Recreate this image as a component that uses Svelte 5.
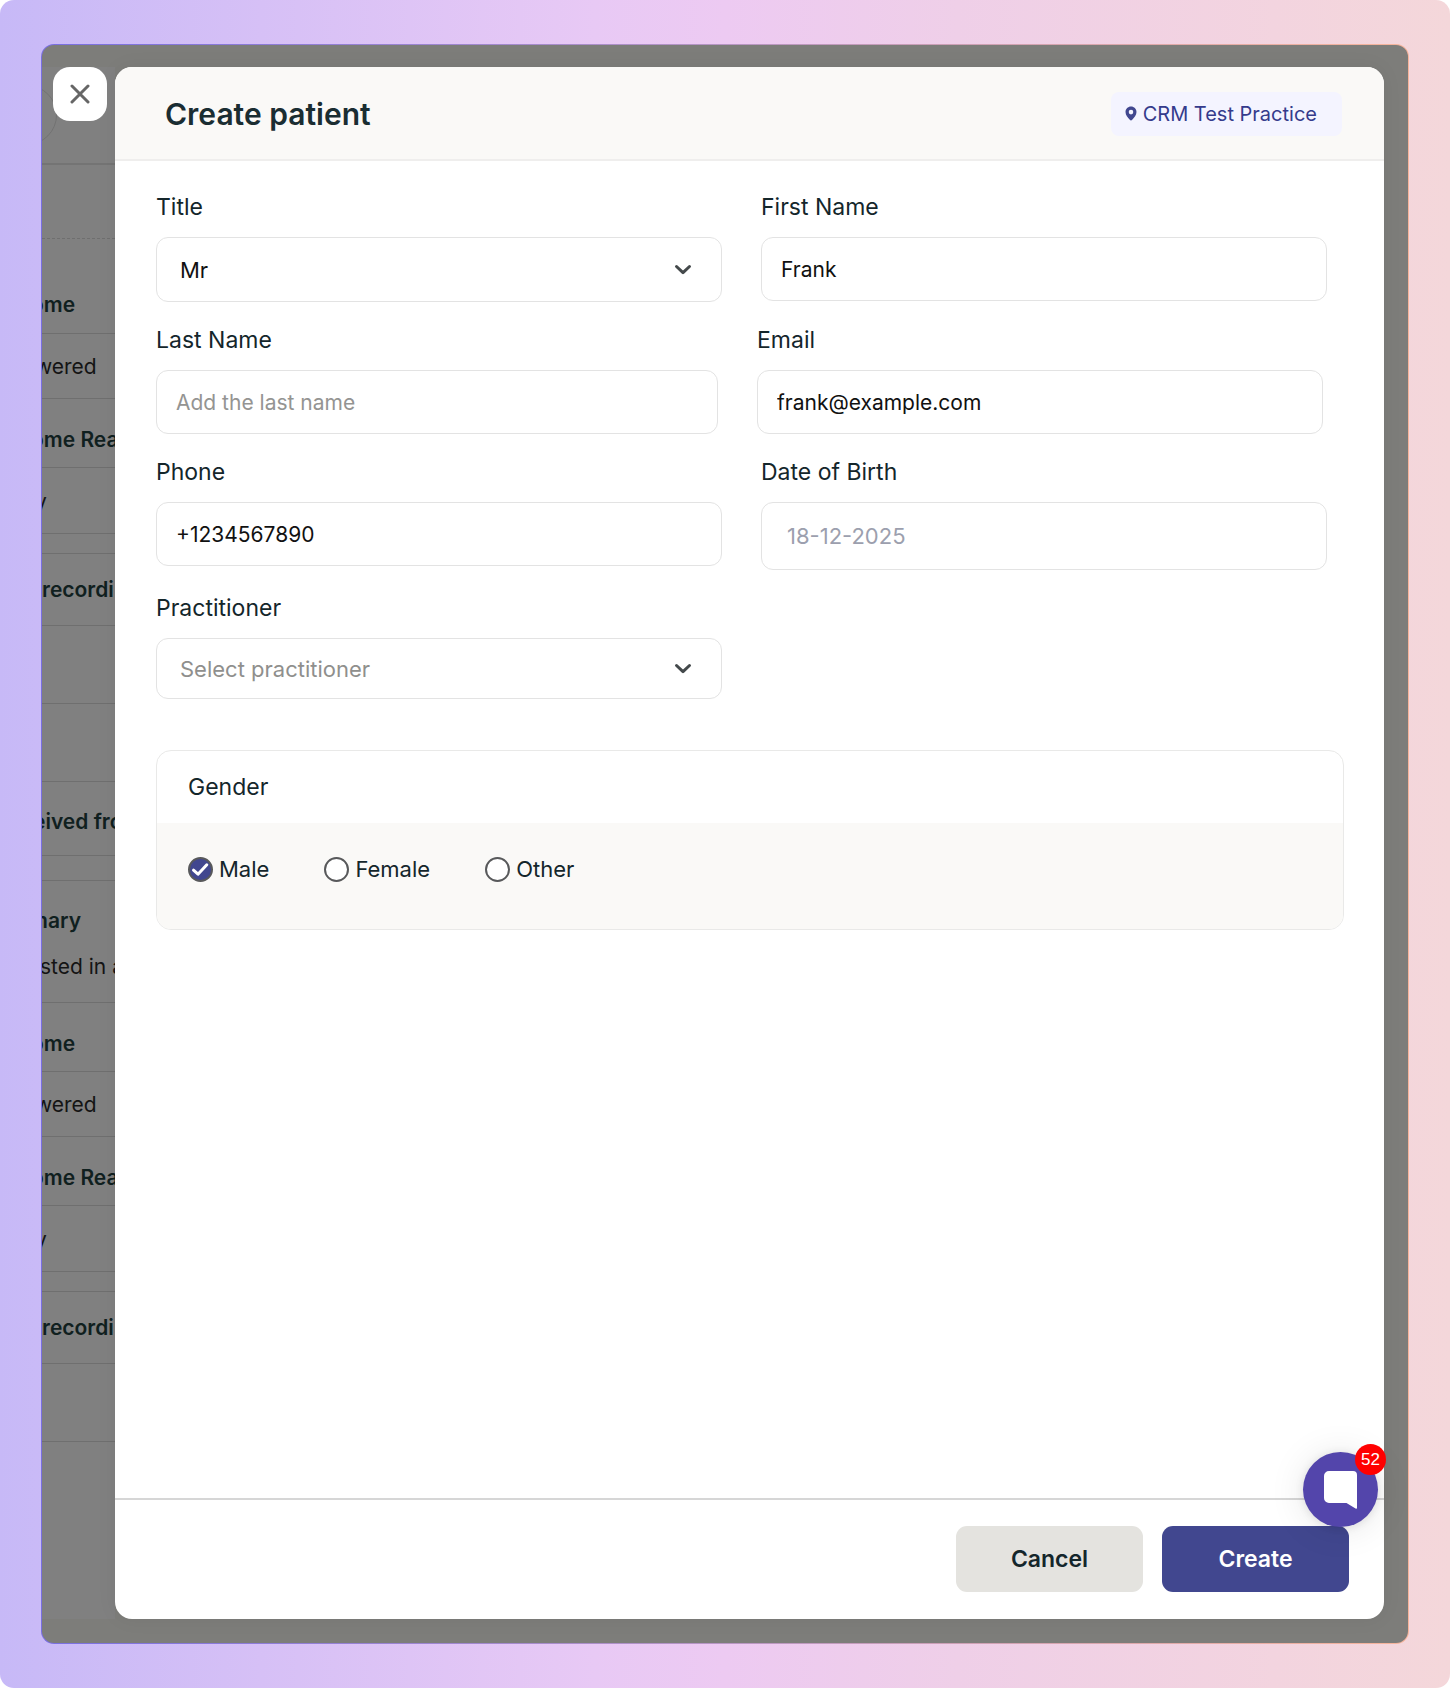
<script>
  let title = $state('Mr');
  let firstName = $state('Frank');
  let lastName = $state('');
  let email = $state('frank@example.com');
  let phone = $state('+1234567890');
  let birthDate = $state('');
  let practitioner = $state('');
  let gender = $state('Male');

  const genders = ['Male', 'Female', 'Other'];

  const rows = [
    { kind: 'bar' },
    { kind: 'dashed' },
    { kind: 'head', text: 'ome' },
    { kind: 'value', text: 'wered' },
    { kind: 'title', text: 'ome Rea' },
    { kind: 'short', text: 'y' },
    { kind: 'gap' },
    { kind: 'record', text: 'recordi' },
    { kind: 'empty' },
    { kind: 'empty' },
    { kind: 'received', text: 'eived fro' },
    { kind: 'gap wide' },
    { kind: 'summary', text: 'mary', note: 'sted in a' },
    { kind: 'title', text: 'ome' },
    { kind: 'value', text: 'wered' },
    { kind: 'title', text: 'ome Rea' },
    { kind: 'short', text: 'y' },
    { kind: 'gap' },
    { kind: 'record', text: 'recordi' },
    { kind: 'empty' }
  ];
</script>

{#snippet chevron()}
  <svg class="chevron" viewBox="0 0 18 12" aria-hidden="true">
    <path d="M2.5 2.5 9 8.7l6.500-6.200" />
  </svg>
{/snippet}

<div class="page">
  <div class="window">
    <div class="screen">
      <aside class="backdrop">
        <span class="avatar"></span>
        {#each rows as row}
          <div class="row {row.kind}">
            {#if row.text}<span>{row.text}</span>{/if}
            {#if row.note}<span class="note">{row.note}</span>{/if}
          </div>
        {/each}
        <button class="close" type="button" aria-label="Close">
          <svg viewBox="0 0 20 20" aria-hidden="true"><path d="M2 2l16 16M18 2L2 18" /></svg>
        </button>
      </aside>

      <form class="dialog" onsubmit={(e) => e.preventDefault()}>
        <header>
          <h1>Create patient</h1>
          <span class="chip">
            <svg viewBox="0 0 12 15" aria-hidden="true">
              <path fill-rule="evenodd" d="M6 .5C2.900.5.500 2.900.500 6c0 3.300 2.300 5.200 4.300 7.800.700.900 1.700.900 2.400 0C9.200 11.200 11.500 9.300 11.500 6 11.500 2.900 9.100.5 6 .5ZM6 3.800a2.300 2.300 0 1 1 0 4.600 2.300 2.300 0 0 1 0-4.600Z" />
            </svg>
            CRM Test Practice
          </span>
        </header>

        <main>
          <div class="fields">
            <div class="pair">
              <div class="field">
                <label for="title">Title</label>
                <div class="select">
                  <select id="title" bind:value={title}>
                    <option>Mr</option>
                    <option>Mrs</option>
                    <option>Ms</option>
                  </select>
                  {@render chevron()}
                </div>
              </div>
              <div class="field">
                <label for="first">First Name</label>
                <input id="first" type="text" bind:value={firstName} />
              </div>
            </div>

            <div class="pair narrow">
              <div class="field">
                <label for="last">Last Name</label>
                <input id="last" type="text" placeholder="Add the last name" bind:value={lastName} />
              </div>
              <div class="field">
                <label for="email">Email</label>
                <input id="email" type="email" bind:value={email} />
              </div>
            </div>

            <div class="pair">
              <div class="field">
                <label for="phone">Phone</label>
                <input id="phone" type="tel" bind:value={phone} />
              </div>
              <div class="field">
                <label for="dob">Date of Birth</label>
                <input id="dob" class="date" type="text" placeholder="18-12-2025" bind:value={birthDate} />
              </div>
            </div>

            <div class="pair">
              <div class="field">
                <label for="practitioner">Practitioner</label>
                <div class="select">
                  <select id="practitioner" class="low" class:unset={!practitioner} bind:value={practitioner}>
                    <option value="">Select practitioner</option>
                  </select>
                  {@render chevron()}
                </div>
              </div>
            </div>
          </div>

          <section class="gender" role="radiogroup" aria-labelledby="gender-title">
            <h2 id="gender-title">Gender</h2>
            <div class="options">
              {#each genders as option}
                <label>
                  <span class="radio">
                    <input type="radio" name="gender" value={option} bind:group={gender} />
                    <svg viewBox="0 0 25 25" aria-hidden="true"><path d="M5.500 13.200l4.500 4 8.800-9.400" /></svg>
                  </span>
                  {option}
                </label>
              {/each}
            </div>
          </section>
        </main>

        <footer>
          <button class="action" type="button">Cancel</button>
          <button class="action primary" type="submit">Create</button>
        </footer>

        <button class="chat" type="button" aria-label="Open chat">
          <svg viewBox="0 0 33 38" aria-hidden="true">
            <path d="M5 0h24a4 4 0 0 1 4 4V37q0 1-1.500.5L22.500 32H5a5 5 0 0 1-5-5V5a5 5 0 0 1 5-5Z" />
          </svg>
          <span class="count">52</span>
        </button>
      </form>
    </div>
  </div>
</div>

<style>
  :global(body) {
    margin: 0;
    background: #fff;
  }

  .page,
  .page * {
    box-sizing: border-box;
  }

  .page {
    display: flex;
    min-height: 100vh;
    padding: 44px 41px;
    border-radius: 14px;
    background: linear-gradient(90deg, #c7b9f7 0%, #d6c0f6 18%, #e8c9f5 41%, #edcaf2 50%, #efcfe8 66%, #f3d4df 88%, #f4d7da 100%);
    font-family: Inter, 'Liberation Sans', sans-serif;
    font-size: 22px;
    line-height: 28px;
    color: #14262b;
  }

  .window {
    display: flex;
    flex: 1;
    min-width: 0;
    padding: 1px;
    border-radius: 13px;
    background: linear-gradient(90deg, #796fe2, #b896c4 50%, #f7b49b);
  }

  .screen {
    display: flex;
    flex: 1;
    min-width: 0;
    padding: 22px 24px 24px 0;
    overflow: hidden;
    border-radius: 12px;
    background: #7d7d7a;
  }

  .backdrop {
    position: relative;
    flex: 0 0 73px;
    min-width: 0;
    background: #808080;
    font-size: 21px;
    white-space: nowrap;
  }

  .avatar {
    position: absolute;
    top: 18px;
    left: -45px;
    width: 60px;
    height: 60px;
    border: 1px solid #727272;
    border-radius: 50%;
    clip-path: inset(0 0 0 45px);
  }

  .row {
    display: flex;
    flex-direction: column;
    justify-content: center;
    overflow: hidden;
    border-bottom: 1px solid #6f6f6f;
    color: #141414;
  }

  .bar { height: 98px; border-bottom: 2px solid #747474; }
  .dashed { height: 74px; border-bottom-style: dashed; }
  .head { height: 95px; padding-top: 38px; }
  .value { height: 65px; padding-top: 2px; }
  .title { height: 69px; padding-top: 14px; }
  .short { height: 66px; padding-top: 2px; }
  .gap { height: 20px; }
  .wide { height: 25px; }
  .record { height: 72px; }
  .empty { height: 78px; }
  .received { height: 74px; padding-top: 6px; }
  .summary { height: 122px; padding-top: 5px; gap: 18px; }

  .head, .title, .record, .received, .summary {
    font-weight: 600;
    color: #10201f;
  }

  .note { font-weight: 400; color: #141414; }
  .head span, .title span { margin-left: -11px; }
  .value span { margin-left: -7px; }
  .short span { margin-left: -7px; }
  .received span { margin-left: -9px; }
  .summary span { margin-left: -13px; }
  .summary .note { margin-left: -2px; }

  .close {
    position: absolute;
    top: 0;
    left: 11px;
    display: grid;
    place-items: center;
    width: 54px;
    height: 54px;
    padding: 0;
    border: 0;
    border-radius: 17px;
    background: #fff;
  }

  .close svg {
    width: 20px;
    height: 20px;
    fill: none;
    stroke: #666;
    stroke-width: 3;
    stroke-linecap: round;
  }

  .dialog {
    position: relative;
    display: flex;
    flex: 1;
    flex-direction: column;
    min-width: 0;
    border-radius: 17px;
    background: #fff;
    box-shadow: 0 0 20px rgb(0 0 0 / 6%);
  }

  header {
    display: flex;
    align-items: center;
    justify-content: space-between;
    height: 94px;
    padding: 1px 42px 0 50px;
    border-bottom: 2px solid #efeeed;
    border-radius: 17px 17px 0 0;
    background: #faf9f7;
  }

  h1 {
    margin: 0;
    font-size: 30px;
    font-weight: 600;
    line-height: 36px;
    color: #1a2d32;
  }

  .chip {
    display: flex;
    align-items: center;
    gap: 6px;
    height: 44px;
    padding: 0 25px 0 14px;
    border-radius: 8px;
    background: #f4f4ff;
    font-size: 20px;
    color: #353b8c;
  }

  .chip svg {
    width: 12px;
    height: 15px;
    fill: #41478f;
  }

  main {
    flex: 1;
    padding: 32px 40px 32px 41px;
  }

  .fields {
    display: flex;
    flex-direction: column;
    gap: 24px;
    padding-right: 17px;
  }

  .pair {
    display: grid;
    grid-template-columns: 1fr 1fr;
    gap: 39px;
  }

  .narrow {
    grid-template-columns: 562fr 566fr;
    padding-right: 4px;
  }

  .field {
    display: flex;
    flex-direction: column;
    gap: 16px;
    min-width: 0;
  }

  .field > label { font-size: 23px; }

  input:not([type='radio']),
  select {
    width: 100%;
    height: 64px;
    padding: 0 19px;
    border: 1px solid #e3e3e3;
    border-radius: 12px;
    outline: 0;
    background: #fff;
    font: inherit;
    font-size: 21px;
    color: #111;
  }

  select {
    height: 65px;
    padding: 0 60px 0 23px;
    font-size: 22px;
    appearance: none;
  }

  input.date {
    height: 68px;
    padding: 0 25px;
    font-size: 22px;
  }

  select.low { height: 61px; }
  select.unset { color: #8f8f8d; }

  input::placeholder { color: #949492; opacity: 1; }
  input.date::placeholder { color: #9c9fae; }

  .select {
    position: relative;
    display: flex;
  }

  .chevron {
    position: absolute;
    top: 50%;
    right: 30px;
    width: 18px;
    height: 12px;
    margin-top: -6px;
    fill: none;
    stroke: #44494b;
    stroke-width: 3;
    stroke-linecap: round;
    stroke-linejoin: round;
    pointer-events: none;
  }

  .gender {
    margin-top: 51px;
    overflow: hidden;
    border: 1px solid #e9e9e8;
    border-radius: 15px;
  }

  h2 {
    margin: 0;
    padding: 22px 31px;
    font-size: 23px;
    font-weight: 400;
    line-height: 28px;
  }

  .options {
    display: flex;
    gap: 55px;
    padding: 32px 31px 46px;
    background: #faf9f7;
  }

  .options label {
    display: flex;
    align-items: center;
    gap: 6px;
  }

  .radio {
    position: relative;
    display: flex;
  }

  .radio input {
    width: 25px;
    height: 25px;
    margin: 0;
    border: 2px solid #58595b;
    border-radius: 50%;
    background: #fff;
    appearance: none;
  }

  .radio input:checked { background: #41478f; }

  .radio svg {
    position: absolute;
    inset: 0;
    fill: none;
    stroke: none;
    stroke-width: 3;
    stroke-linecap: round;
    stroke-linejoin: round;
    pointer-events: none;
  }

  .radio input:checked + svg { stroke: #fff; }

  footer {
    display: flex;
    justify-content: flex-end;
    gap: 19px;
    padding: 26px 35px 27px;
    border-top: 2px solid #d6d6d6;
  }

  .action {
    width: 187px;
    height: 66px;
    padding: 0;
    border: 0;
    border-radius: 11px;
    background: #e4e3df;
    font: inherit;
    font-size: 23px;
    font-weight: 600;
    color: #14262b;
  }

  .primary {
    background: #41478f;
    color: #fff;
  }

  .chat {
    position: absolute;
    right: 6px;
    bottom: 92px;
    display: grid;
    place-items: center;
    width: 75px;
    height: 75px;
    padding: 0;
    border: 0;
    border-radius: 50%;
    background: #5345ab;
    box-shadow: 0 1px 8px rgb(0 0 0 / 10%), 0 2px 36px rgb(0 0 0 / 10%);
  }

  .chat svg {
    width: 33px;
    height: 38px;
    fill: #fff;
  }

  .count {
    position: absolute;
    top: -8px;
    right: -8px;
    width: 31px;
    height: 31px;
    border-radius: 50%;
    background: #f00;
    font-family: 'Liberation Sans', sans-serif;
    font-size: 17px;
    line-height: 31px;
    text-align: center;
    color: #fff;
  }
</style>
